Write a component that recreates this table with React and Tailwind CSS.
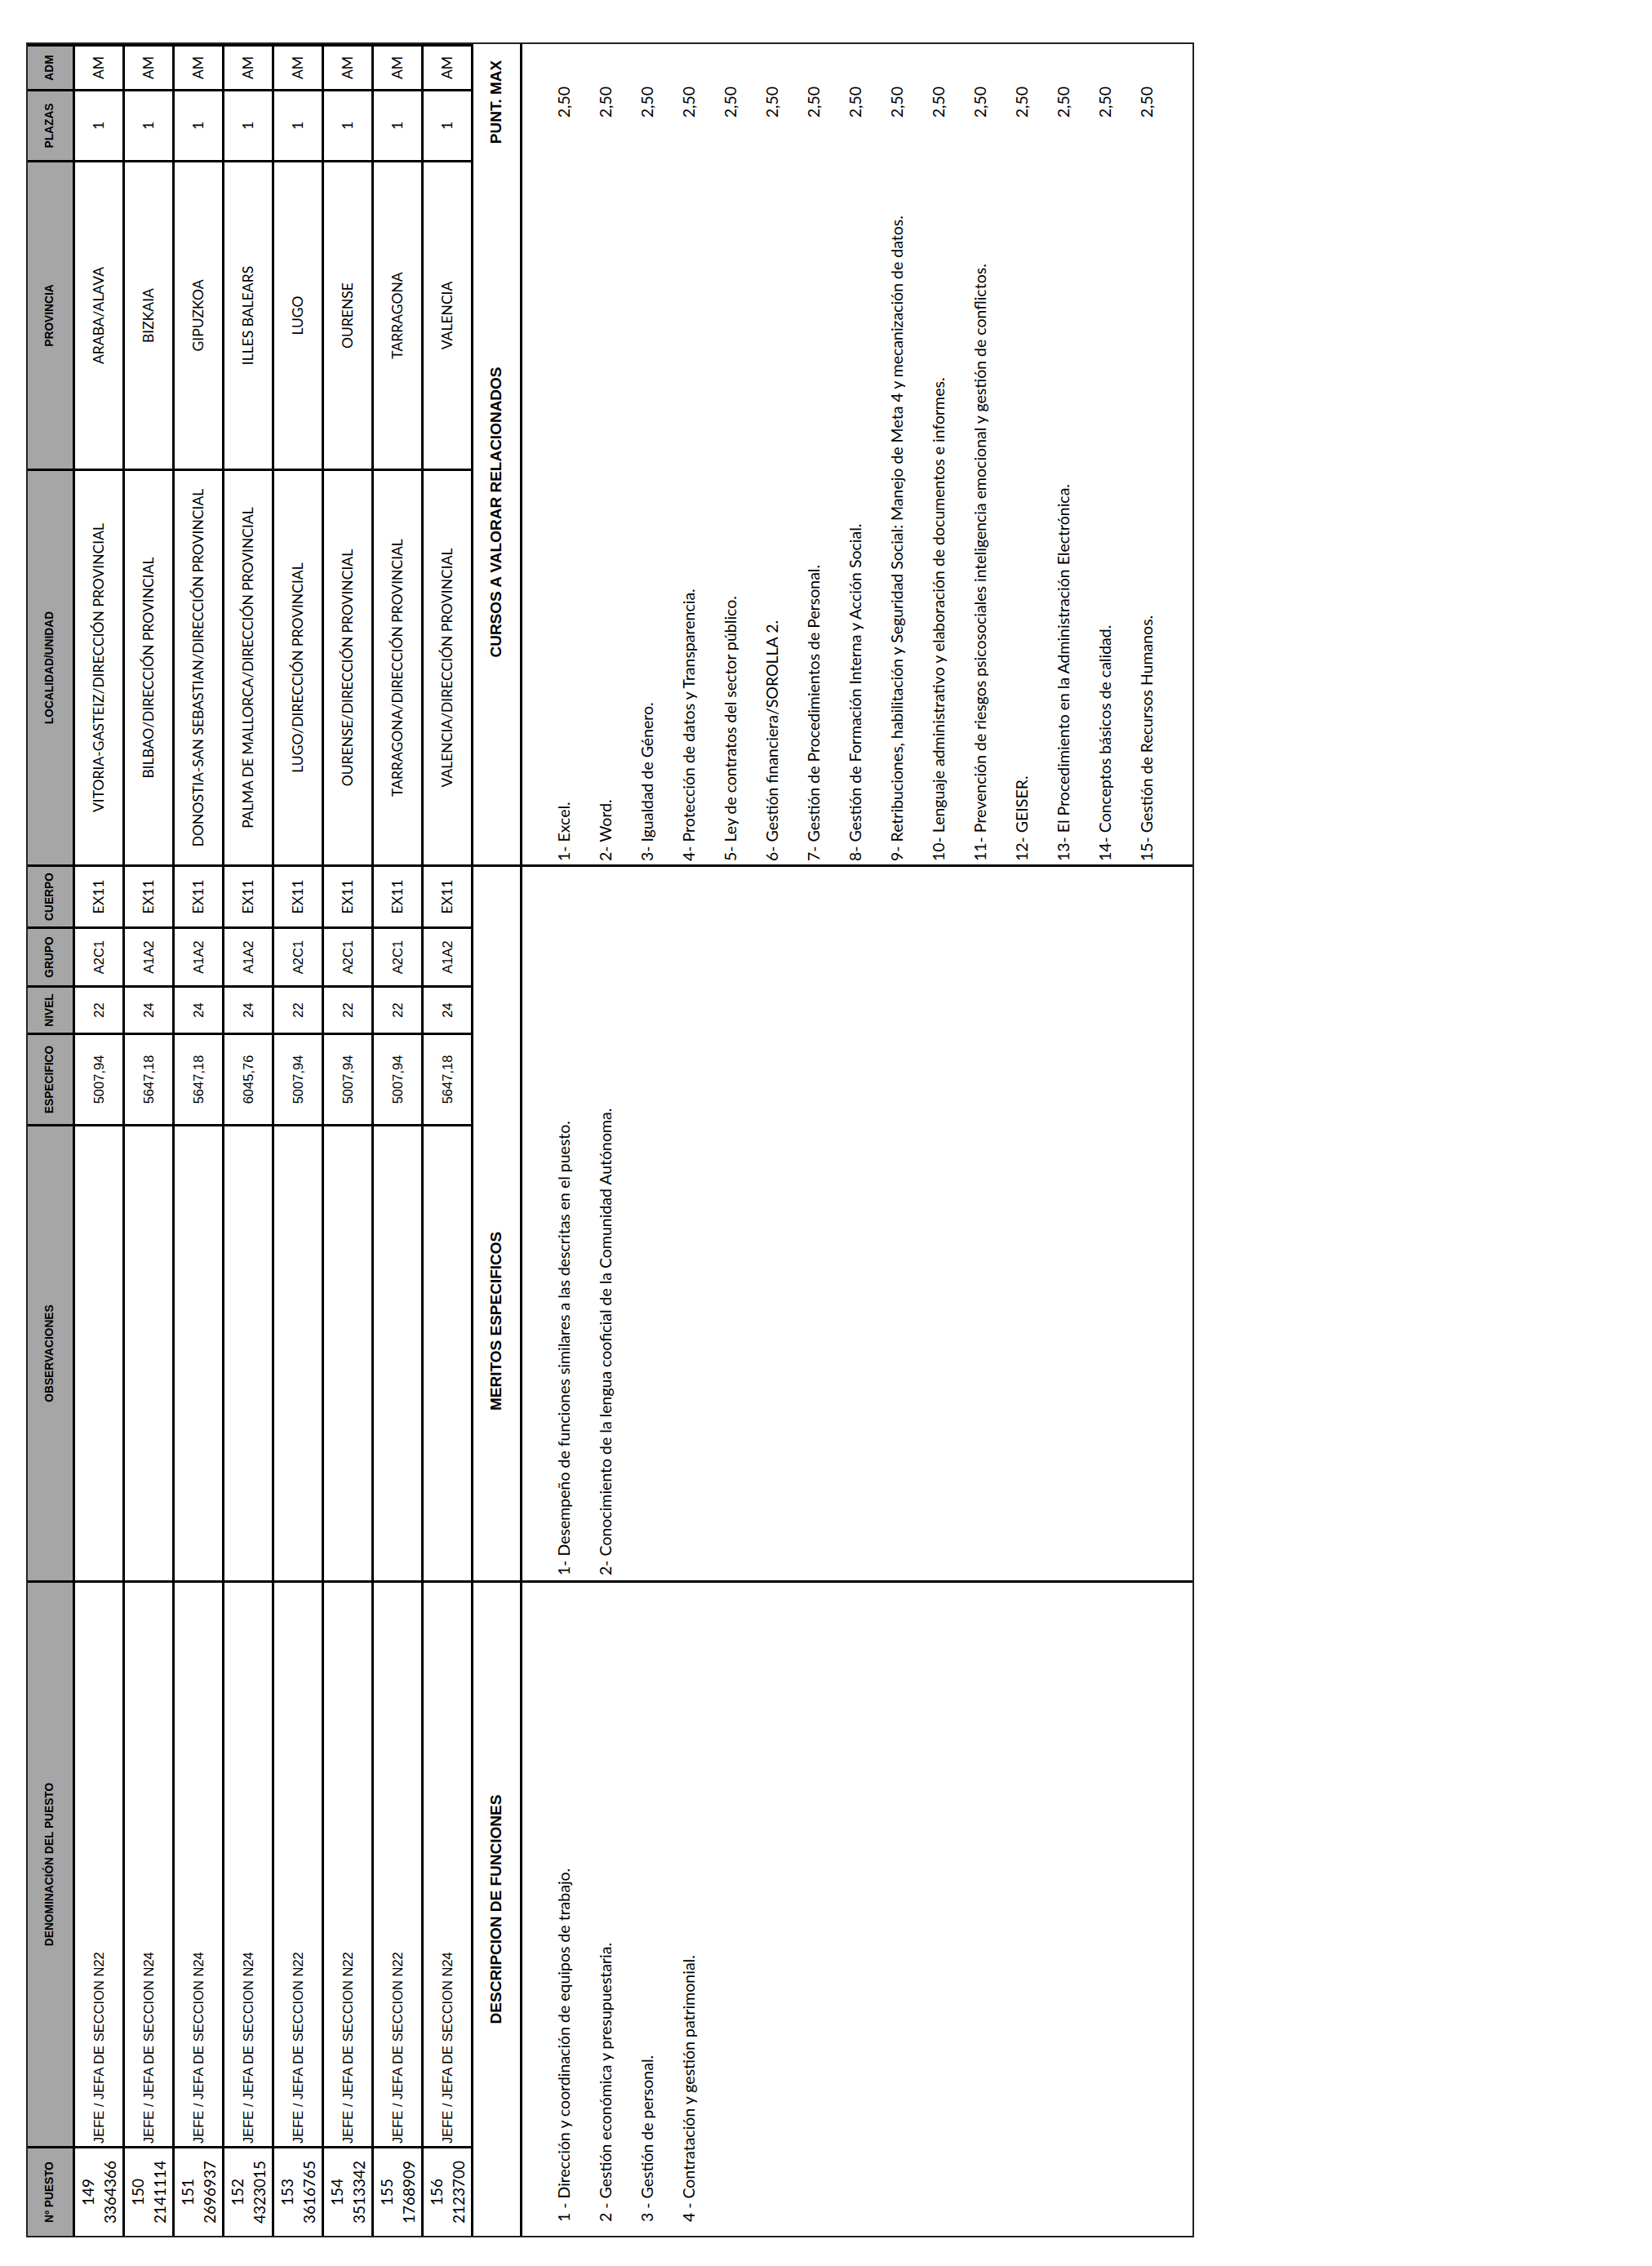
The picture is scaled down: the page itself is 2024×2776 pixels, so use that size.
import React from "react";

const rows = [
  ["149", "3364366", "JEFE / JEFA DE SECCION N22", "5007,94", "22", "A2C1", "EX11", "VITORIA-GASTEIZ/DIRECCIÓN PROVINCIAL", "ARABA/ALAVA"],
  ["150", "2141114", "JEFE / JEFA DE SECCION N24", "5647,18", "24", "A1A2", "EX11", "BILBAO/DIRECCIÓN PROVINCIAL", "BIZKAIA"],
  ["151", "2696937", "JEFE / JEFA DE SECCION N24", "5647,18", "24", "A1A2", "EX11", "DONOSTIA-SAN SEBASTIAN/DIRECCIÓN PROVINCIAL", "GIPUZKOA"],
  ["152", "4323015", "JEFE / JEFA DE SECCION N24", "6045,76", "24", "A1A2", "EX11", "PALMA DE MALLORCA/DIRECCIÓN PROVINCIAL", "ILLES BALEARS"],
  ["153", "3616765", "JEFE / JEFA DE SECCION N22", "5007,94", "22", "A2C1", "EX11", "LUGO/DIRECCIÓN PROVINCIAL", "LUGO"],
  ["154", "3513342", "JEFE / JEFA DE SECCION N22", "5007,94", "22", "A2C1", "EX11", "OURENSE/DIRECCIÓN PROVINCIAL", "OURENSE"],
  ["155", "1768909", "JEFE / JEFA DE SECCION N22", "5007,94", "22", "A2C1", "EX11", "TARRAGONA/DIRECCIÓN PROVINCIAL", "TARRAGONA"],
  ["156", "2123700", "JEFE / JEFA DE SECCION N24", "5647,18", "24", "A1A2", "EX11", "VALENCIA/DIRECCIÓN PROVINCIAL", "VALENCIA"],
];

const headers = [
  "Nº PUESTO",
  "DENOMINACIÓN DEL PUESTO",
  "OBSERVACIONES",
  "ESPECIFICO",
  "NIVEL",
  "GRUPO",
  "CUERPO",
  "LOCALIDAD/UNIDAD",
  "PROVINCIA",
  "PLAZAS",
  "ADM",
];

const funciones = [
  "1 - Dirección y coordinación de equipos de trabajo.",
  "2 - Gestión económica y presupuestaria.",
  "3 - Gestión de personal.",
  "4 - Contratación y gestión patrimonial.",
];

const meritos = [
  "1- Desempeño de funciones similares a las descritas en el puesto.",
  "2- Conocimiento de la lengua cooficial de la Comunidad Autónoma.",
];

const cursos = [
  "1- Excel.",
  "2- Word.",
  "3- Igualdad de Género.",
  "4- Protección de datos y Transparencia.",
  "5- Ley de contratos del sector público.",
  "6- Gestión financiera/SOROLLA 2.",
  "7- Gestión de Procedimientos de Personal.",
  "8- Gestión de Formación Interna y Acción Social.",
  "9- Retribuciones, habilitación y Seguridad Social: Manejo de Meta 4 y mecanización de datos.",
  "10- Lenguaje administrativo y elaboración de documentos e informes.",
  "11- Prevención de riesgos psicosociales inteligencia emocional y gestión de conflictos.",
  "12- GEISER.",
  "13- El Procedimiento en la Administración Electrónica.",
  "14- Conceptos básicos de calidad.",
  "15- Gestión de Recursos Humanos.",
];

const arial = "font-['Liberation_Sans',Arial,sans-serif]";
const calibri = "font-['Lato','Open_Sans',sans-serif]";

const cell = "border-r-[3px] border-b-[3px] border-black flex items-center overflow-hidden whitespace-nowrap";

export default function App() {
  return (
    <div className="w-[2024px] h-[2776px] bg-white pl-[32px] pt-[52px] text-black">
      <div className="relative w-[1431px] h-[2689px]">
        <div className="absolute left-0 top-0 w-[2689px] h-[1431px] origin-top-left -rotate-90 translate-y-[2689px] border-2 border-[#222] flex flex-col">
          {/* Header row */}
          <div className="grid grid-cols-[110px_693px_559px_112px_58px_72px_76px_485px_378px_87px_55px] h-[58px]">
            {headers.map((h, i) => (
              <div
                key={h}
                className={`${cell} ${i === headers.length - 1 ? "border-r-0" : ""} justify-center bg-[#a6a6a6] ${arial} font-bold text-[13.75px]`}
              >
                {h}
              </div>
            ))}
          </div>

          {/* Data rows */}
          {rows.map((r) => (
            <div
              key={r[0]}
              className="grid grid-cols-[110px_693px_559px_112px_58px_72px_76px_485px_378px_87px_55px] h-[61px]"
            >
              <div className={`${cell} flex-col justify-center ${calibri} text-[19px] leading-[27px]`}>
                <span>{r[0]}</span>
                <span>{r[1]}</span>
              </div>
              <div className={`${cell} justify-start pl-[3px] ${arial} text-[16.5px]`}>{r[2]}</div>
              <div className={`${cell}`}></div>
              <div className={`${cell} justify-center ${arial} text-[16.5px]`}>{r[3]}</div>
              <div className={`${cell} justify-center ${arial} text-[16.5px]`}>{r[4]}</div>
              <div className={`${cell} justify-center ${arial} text-[16.5px]`}>{r[5]}</div>
              <div className={`${cell} justify-center ${calibri} text-[17.5px]`}>{r[6]}</div>
              <div className={`${cell} justify-center ${calibri} text-[17.5px]`}>{r[7]}</div>
              <div className={`${cell} justify-center ${calibri} text-[17.5px]`}>{r[8]}</div>
              <div className={`${cell} justify-center ${calibri} text-[17.5px]`}>1</div>
              <div className={`${cell} border-r-0 justify-center ${calibri} text-[17.5px]`}>AM</div>
            </div>
          ))}

          {/* Section headings */}
          <div className={`grid grid-cols-[803px_877px_1005px] h-[60px] ${arial} font-bold text-[19px]`}>
            <div className={`${cell} justify-center`}>DESCRIPCION DE FUNCIONES</div>
            <div className={`${cell} justify-start pl-[208px]`}>MERITOS ESPECIFICOS</div>
            <div className="border-b-[3px] border-black flex items-center whitespace-nowrap">
              <div className="w-[863px] flex justify-center">CURSOS A VALORAR RELACIONADOS</div>
              <div className="flex-1 flex justify-center">PUNT. MAX</div>
            </div>
          </div>

          {/* Content */}
          <div className={`grid grid-cols-[803px_877px_1005px] flex-1 ${calibri} text-[19.5px] leading-[51px]`}>
            <div className="border-r-[3px] border-black pl-[17px] pt-[25px] flex flex-col whitespace-nowrap">
              {funciones.map((f) => (
                <div key={f}>{f}</div>
              ))}
            </div>
            <div className="border-r-[3px] border-black pl-[6px] pt-[25px] flex flex-col whitespace-nowrap">
              {meritos.map((m) => (
                <div key={m}>{m}</div>
              ))}
            </div>
            <div className="pt-[25px] flex flex-col whitespace-nowrap">
              {cursos.map((c) => (
                <div key={c} className="flex">
                  <div className="w-[863px] pl-[4px]">{c}</div>
                  <div className="flex-1 flex justify-center">2,50</div>
                </div>
              ))}
            </div>
          </div>
        </div>
      </div>
    </div>
  );
}
